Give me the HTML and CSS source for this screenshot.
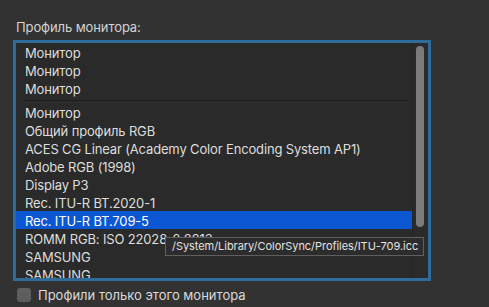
FILE: index.html
```html
<!DOCTYPE html>
<html lang="ru">
<head>
<meta charset="UTF-8">
<title>Профиль монитора</title>
<link rel="stylesheet" href="styles.css">
</head>
<body>
<div class="pane">
    <div class="pane-label">Профиль монитора:</div>
    <div class="profile-list">
        <div class="items">
            <div class="item">Монитор</div>
            <div class="item">Монитор</div>
            <div class="item">Монитор</div>
            <div class="sep"></div>
            <div class="item">Монитор</div>
            <div class="item">Общий профиль RGB</div>
            <div class="item">ACES CG Linear (Academy Color Encoding System AP1)</div>
            <div class="item">Adobe RGB (1998)</div>
            <div class="item">Display P3</div>
            <div class="item">Rec. ITU-R BT.2020-1</div>
            <div class="item selected">Rec. ITU-R BT.709-5</div>
            <div class="item">ROMM RGB: ISO 22028-2:2013</div>
            <div class="item">SAMSUNG</div>
            <div class="item">SAMSUNG</div>
        </div>
        <div class="scroll">
            <div class="thumb"></div>
        </div>
        <div class="tooltip">/System/Library/ColorSync/Profiles/ITU-709.icc</div>
    </div>
    <label class="only-this">
        <span class="checkbox"></span>
        Профили только этого монитора
    </label>
</div>
</body>
</html>
```

FILE: styles.css
```css
body {
    margin: 0;
    background-color: #323232;
    font-family: Inter, "Noto Sans", sans-serif;
    color: #dedede;
    width: 489px;
    height: 307px;
    overflow: hidden;
}
.pane {
    padding: 19px 0 0 13px;
}
.pane-label {
    font-size: 13px;
    line-height: 16px;
    margin: 0 0 5px 3px;
    color: #d4d4d4;
    letter-spacing: -0.1px;
}
.profile-list {
    position: relative;
    width: 418px;
    height: 241px;
    box-sizing: border-box;
    border: 3px solid #2f6c9a;
    background-color: #2a2a2a;
    display: flex;
}
.items {
    flex: 1;
    overflow: hidden;
}
.item {
    height: 17px;
    padding-top: 1px;
    line-height: 18px;
    font-size: 13px;
    letter-spacing: -0.15px;
    padding-left: 9px;
    white-space: nowrap;
}
.item.selected {
    background-color: #0b56d3;
    color: #ffffff;
}
.sep {
    height: 1px;
    margin: 3px 5px 2px 8px;
    background-color: #1c1c1c;
}
.scroll {
    width: 15px;
    border-left: 1px solid #232323;
    padding-top: 3px;
}
.thumb {
    width: 8px;
    height: 181px;
    margin-left: 3px;
    border-radius: 4px;
    background-color: #7b7b7b;
}
.tooltip {
    position: absolute;
    left: 149px;
    top: 194px;
    width: 259px;
    height: 19px;
    box-sizing: border-box;
    padding-left: 6px;
    line-height: 17px;
    font-size: 11px;
    letter-spacing: -0.05px;
    color: #e2e2e2;
    background-color: #2c2c2c;
    border: 1px solid #5f5f5f;
    white-space: nowrap;
}
.only-this {
    display: flex;
    align-items: center;
    gap: 7px;
    margin: 7px 0 0 4px;
    font-size: 13px;
    line-height: 14px;
    color: #dadada;
}
.checkbox {
    width: 14px;
    height: 14px;
    border-radius: 3px;
    background-color: #5e5e5e;
}
```
